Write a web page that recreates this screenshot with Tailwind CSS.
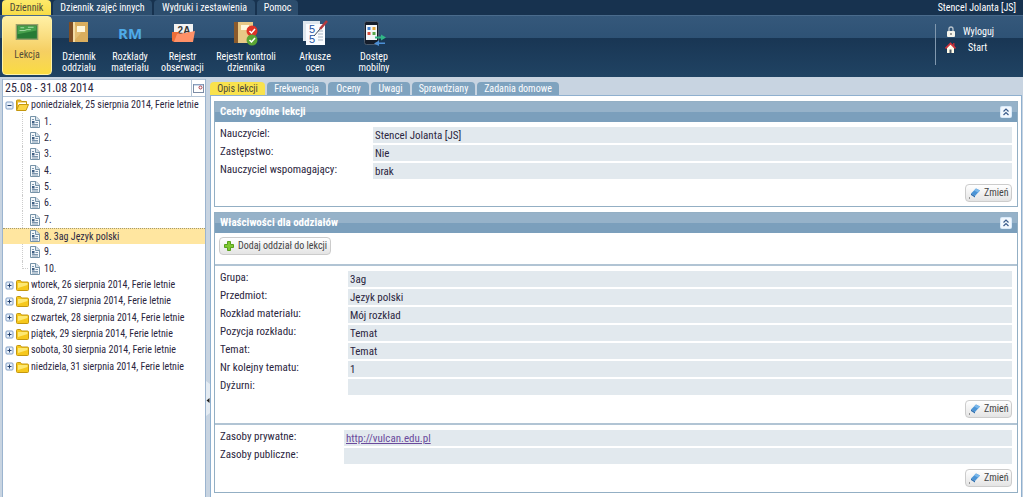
<!DOCTYPE html>
<html lang="pl">
<head>
<meta charset="utf-8">
<title>Dziennik</title>
<script src="https://cdn.jsdelivr.net/npm/@tailwindcss/browser@4"></script>
</head>
<body class="flex h-screen flex-col overflow-hidden bg-[#c8d4e1] font-['Roboto_Condensed','DejaVu_Sans_Condensed',sans-serif] text-[10px] leading-4 whitespace-nowrap text-[#2b2640]">
<svg class="hidden">
  <symbol id="doc" viewBox="0 0 10 12"><path d="M.5.5h5.500l3.500 3.500v7.500h-9z" fill="#f4f8fb" stroke="#7693a8"/><path d="M5.500.5v4h4" fill="#d5e2ec" stroke="#7693a8"/><path d="M2 5h2.500v2.500H2z" fill="#3f5f83"/><path d="M2 3.500h2M5.500 6.500h2.500M2 8.500h6M2 10h6" stroke="#5d7c9a" stroke-width=".8"/></symbol>
  <symbol id="folder" viewBox="0 0 13 12"><path d="M.5 10.500v-8q0-1 1-1h3l1 1.500h6q1 0 1 1v6.500q0 1-1 1h-10q-1 0-1-1z" fill="#f6c81d" stroke="#c4970e"/><path d="M2 4h9.500v2L2 9z" fill="#fff08a" opacity=".8"/></symbol>
  <symbol id="folderopen" viewBox="0 0 13 12"><path d="M.5 11V2q0-1 1-1h3l1 1.500h5V5" fill="#e9b92a" stroke="#c4970e"/><path d="M2 3.500h8V6H2z" fill="#fff"/><path d="M.5 11.500L3 5.500h9.500L10 11.500z" fill="#fbd544" stroke="#c4970e"/></symbol>
  <symbol id="plus" viewBox="0 0 9 9"><rect x="1" y="1" width="7" height="7" rx="1" fill="#e8f0fa" stroke="#7f9dc4"/><path d="M2.500 4.500h4M4.500 2.500v4" stroke="#23406e"/></symbol>
  <symbol id="minus" viewBox="0 0 9 9"><rect x="1" y="1" width="7" height="7" rx="1" fill="#e8f0fa" stroke="#7f9dc4"/><path d="M2.500 4.500h4" stroke="#23406e"/></symbol>
  <symbol id="collapse" viewBox="0 0 12 12"><rect width="12" height="12" rx="2" fill="#d9eafa"/><rect x="1" y="1" width="10" height="10" rx="1" fill="#f2f8fe"/><path d="M3.500 5.500L6 3l2.500 2.500M3.500 9L6 6.500 8.500 9" fill="none" stroke="#3a5c8c" stroke-width="1.200"/></symbol>
  <symbol id="edit" viewBox="0 0 12 12"><path d="M3 6.500L8 1.500l4 2L7 9z" fill="#4b94d6"/><path d="M3 6.500L7 9v1.500L3 8z" fill="#2a6cae"/><path d="M6 3.500l2-2 4 2-2 2z" fill="#7ab7ea"/><path d="M1 10.500h1v1H1z" fill="#444"/></symbol>
</svg>

<header class="flex h-[77px] shrink-0 flex-col bg-[#17324f] text-white">
  <nav class="flex h-[15px] items-stretch gap-0.5 pl-0.5 leading-4">
    <button class="w-[49px] rounded-t bg-linear-to-b from-[#fdea6b] to-[#f8dc45] text-[#4d4a3a]">Dziennik</button>
    <button class="w-[99px] rounded-t bg-[#2c4d6d]">Dziennik zajęć innych</button>
    <button class="w-[101px] rounded-t bg-[#2c4d6d]">Wydruki i zestawienia</button>
    <button class="w-[41px] rounded-t bg-[#2c4d6d]">Pomoc</button>
    <span class="ml-auto pr-[7px]">Stencel Jolanta [JS]</span>
  </nav>
  <div class="flex min-h-0 flex-1 border-t border-[#4a6b8c] bg-linear-to-b from-[#35587b] from-0% via-[#2e5275] via-36% to-[#2e5275]">
   <div class="flex flex-1 bg-[linear-gradient(to_bottom,transparent_36%,#193654_36%,#204363_100%)] pl-0.5">
    <button class="mb-0.5 flex w-[50px] flex-col items-center rounded-sm border border-[#fff3a8] bg-linear-to-b from-[#fff0a4] via-[#f5cf62] via-60% to-[#fadc40] pt-[7px] text-[#554d38]">
      <svg class="h-4 w-6" viewBox="0 0 24 17"><rect width="24" height="17" fill="#9aa06b"/><rect x="1.500" y="1.500" width="21" height="14" fill="#277b35"/><path d="M2 2h20v5L2 11z" fill="#46a04b"/><path d="M4 7h5l3-1h4M5 4h4M13 3.500h6" stroke="#c9efc6" stroke-width=".8" fill="none"/></svg>
      <span class="mt-[7px]">Lekcja</span>
    </button>
    <button class="flex w-[54px] flex-col items-center pt-[5px] leading-[11px]">
      <svg class="size-[22px]" viewBox="0 0 22 22"><path d="M1 1h5v20H1z" fill="#7d4d24"/><path d="M5 1h15v20H5z" fill="#e3bd73"/><path d="M5 1h15v20H5l8-9z" fill="#d4a450" opacity=".6"/><path d="M5 1h2v20H5z" fill="#f3dca4"/><path d="M9 5h8v6H9z" fill="#fff7dc"/></svg><span class="mt-2">Dziennik<br>oddziału</span>
    </button>
    <button class="flex w-[48px] flex-col items-center pt-[5px] leading-[11px]">
      <svg class="h-[22px] w-6" viewBox="0 0 24 22"><text x="12" y="18" text-anchor="middle" font-family="Open Sans" font-weight="700" font-size="15" fill="#4eaae8">RM</text></svg><span class="mt-2">Rozkłady<br>materiału</span>
    </button>
    <button class="flex w-[57px] flex-col items-center pt-[5px] leading-[11px]">
      <svg class="h-[22px] w-6" viewBox="0 0 24 22"><path d="M3 3h19v15H3z" fill="#f3f3f3"/><text x="13" y="13" text-anchor="middle" font-family="Liberation Sans" font-weight="700" font-size="10" fill="#333">2A</text><path d="M1 20V11h6l2 2h10v8H3z" fill="#ee6e38"/><path d="M3 21l3-8 8-1 10-2-2 11z" fill="#ff9168"/></svg><span class="mt-2">Rejestr<br>obserwacji</span>
    </button>
    <button class="flex w-[70px] flex-col items-center pt-[5px] leading-[11px]">
      <svg class="h-[25px] w-6" viewBox="0 0 24 25"><path d="M0 1h4v21H0z" fill="#8a5a2c"/><path d="M4 1h15v21H4z" fill="#e8c886"/><path d="M7 4h8v5H7z" fill="#fff7dc"/><circle cx="18" cy="10" r="5.500" fill="#df3226"/><path d="M15.500 10l2 2 3.500-4" stroke="#fff" stroke-width="1.500" fill="none"/><circle cx="18" cy="19" r="5.500" fill="#5aa534"/><path d="M15.500 19l2 2 3.500-4" stroke="#fff" stroke-width="1.500" fill="none"/></svg><span class="mt-[5px]">Rejestr kontroli<br>dziennika</span>
    </button>
    <button class="flex w-[68px] flex-col items-center pt-[3px] leading-[11px]">
      <svg class="h-[27px] w-7" viewBox="0 0 28 27"><path d="M2 2h17v20H2z" fill="#dfe7ee"/><path d="M5 5h19v21H5z" fill="#fafcff"/><text x="8" y="14" font-family="Liberation Sans" font-size="11" fill="#2455a4">5</text><text x="8" y="24" font-family="Liberation Sans" font-size="11" fill="#2455a4">5</text><path d="M17 12h5M17 15h5M17 18h5M17 21h5" stroke="#a7b6c4"/><path d="M26 2L19 10" stroke="#b23a3e" stroke-width="2.500"/><path d="M19 10l-6 7" stroke="#424a58"/></svg><span class="mt-[5px]">Arkusze<br>ocen</span>
    </button>
    <button class="flex w-[50px] flex-col items-center pt-[5px] leading-[11px]">
      <svg class="h-[25px] w-6" viewBox="0 0 24 25"><rect x="2.500" y=".5" width="14" height="23" rx="2" fill="#151d2a" stroke="#4c5b6c"/><rect x="4" y="4" width="11" height="15" fill="#f3f7fa"/><path d="M5.500 6h3v3h-3z" fill="#4583d0"/><path d="M10.500 6h3v3h-3z" fill="#e7a83b"/><path d="M5.500 11h3v3h-3z" fill="#d84f3c"/><path d="M10.500 11h3v3h-3z" fill="#58a84c"/><path d="M13 15.500h6v-2l5 3-5 3v-2h-6z" fill="#31b686"/><path d="M23 21.500h-6v-2l-5 3 5 2.500v-2h6z" fill="#4c8fd5"/></svg><span class="mt-[5px]">Dostęp<br>mobilny</span>
    </button>
    <div class="mt-2 mb-3 ml-auto w-[88px] border-l border-[#8198ae]">
      <button class="flex h-4 items-center leading-none"><svg class="mr-2 ml-[11px] h-3 w-2" viewBox="0 0 8 12"><path d="M2 6V3q0-2 2-2t2 2v3" fill="none" stroke="#b9c4cd" stroke-width="1.300"/><rect y="5" width="8" height="6" rx="1" fill="#f5f4ec"/><path d="M3.500 7h1v2h-1z" fill="#444"/></svg>Wyloguj</button>
      <button class="flex h-4 items-center leading-none"><svg class="mr-3 ml-[9px] h-3 w-[11px]" viewBox="0 0 11 12"><path d="M8 1h1.500v4H8z" fill="#b92c34"/><path d="M2 5.500L5.500 2 9 5.500V11H2z" fill="#fffbe8"/><path d="M.5 6.500l5-5 5 5" stroke="#d3323c" stroke-width="1.700" fill="none"/><path d="M4.500 7.500h2V11h-2z" fill="#4c5662"/></svg>Start</button>
    </div>
   </div>
  </div>
</header>

<main class="flex min-h-0 flex-1 pt-0.5">
  <aside class="ml-0.5 flex w-[204px] shrink-0 flex-col border-x border-[#9bb4cf] bg-white">
    <div class="flex h-[18px] items-center border-y border-[#b3c4d6]">
      <input aria-label="Zakres dat" value="25.08 - 31.08 2014" class="min-w-0 flex-1 px-0.5 text-[12px] leading-4 outline-none">
      <button aria-label="Wybierz datę" class="flex h-4 w-3.5 items-center justify-center border-l border-[#b3c4d6]"><svg class="h-[9px] w-[11px]" viewBox="0 0 11 9"><rect x=".5" y=".5" width="10" height="8" fill="#fff" stroke="#7c8ca5"/><path d="M1 1h9" stroke="#9db7da"/><circle cx="7.500" cy="3.500" r="1.500" fill="none" stroke="#a83c4a"/></svg></button>
    </div>
    <ul class="grid h-[278px] auto-rows-fr">
      <li class="flex items-center pl-0.5"><svg class="size-[9px] shrink-0"><use href="#minus"/></svg><svg class="mx-0.5 h-3 w-[13px] shrink-0"><use href="#folderopen"/></svg>poniedziałek, 25 sierpnia 2014, Ferie letnie</li>
      <li class="flex items-center"><i class="ml-[19px] h-full w-1.5 border-l border-dotted border-[#ccc]"></i><svg class="mr-1 ml-0.5 h-3 w-2.5"><use href="#doc"/></svg>1.</li>
      <li class="flex items-center"><i class="ml-[19px] h-full w-1.5 border-l border-dotted border-[#ccc]"></i><svg class="mr-1 ml-0.5 h-3 w-2.5"><use href="#doc"/></svg>2.</li>
      <li class="flex items-center"><i class="ml-[19px] h-full w-1.5 border-l border-dotted border-[#ccc]"></i><svg class="mr-1 ml-0.5 h-3 w-2.5"><use href="#doc"/></svg>3.</li>
      <li class="flex items-center"><i class="ml-[19px] h-full w-1.5 border-l border-dotted border-[#ccc]"></i><svg class="mr-1 ml-0.5 h-3 w-2.5"><use href="#doc"/></svg>4.</li>
      <li class="flex items-center"><i class="ml-[19px] h-full w-1.5 border-l border-dotted border-[#ccc]"></i><svg class="mr-1 ml-0.5 h-3 w-2.5"><use href="#doc"/></svg>5.</li>
      <li class="flex items-center"><i class="ml-[19px] h-full w-1.5 border-l border-dotted border-[#ccc]"></i><svg class="mr-1 ml-0.5 h-3 w-2.5"><use href="#doc"/></svg>6.</li>
      <li class="flex items-center"><i class="ml-[19px] h-full w-1.5 border-l border-dotted border-[#ccc]"></i><svg class="mr-1 ml-0.5 h-3 w-2.5"><use href="#doc"/></svg>7.</li>
      <li class="flex items-center border-t border-dotted border-[#a59a70] bg-[#ffe6a0]"><i class="ml-[19px] w-1.5"></i><svg class="mr-1 ml-0.5 h-3 w-2.5"><use href="#doc"/></svg>8. 3ag Język polski</li>
      <li class="flex items-center"><i class="ml-[19px] h-full w-1.5 border-l border-dotted border-[#ccc]"></i><svg class="mr-1 ml-0.5 h-3 w-2.5"><use href="#doc"/></svg>9.</li>
      <li class="flex items-center"><i class="mb-2 ml-[19px] h-2 w-1.5 border-b border-l border-dotted border-[#ccc]"></i><svg class="mr-1 ml-0.5 h-3 w-2.5"><use href="#doc"/></svg>10.</li>
      <li class="flex items-center pl-0.5"><svg class="size-[9px] shrink-0"><use href="#plus"/></svg><svg class="mx-0.5 h-3 w-[13px] shrink-0"><use href="#folder"/></svg>wtorek, 26 sierpnia 2014, Ferie letnie</li>
      <li class="flex items-center pl-0.5"><svg class="size-[9px] shrink-0"><use href="#plus"/></svg><svg class="mx-0.5 h-3 w-[13px] shrink-0"><use href="#folder"/></svg>środa, 27 sierpnia 2014, Ferie letnie</li>
      <li class="flex items-center pl-0.5"><svg class="size-[9px] shrink-0"><use href="#plus"/></svg><svg class="mx-0.5 h-3 w-[13px] shrink-0"><use href="#folder"/></svg>czwartek, 28 sierpnia 2014, Ferie letnie</li>
      <li class="flex items-center pl-0.5"><svg class="size-[9px] shrink-0"><use href="#plus"/></svg><svg class="mx-0.5 h-3 w-[13px] shrink-0"><use href="#folder"/></svg>piątek, 29 sierpnia 2014, Ferie letnie</li>
      <li class="flex items-center pl-0.5"><svg class="size-[9px] shrink-0"><use href="#plus"/></svg><svg class="mx-0.5 h-3 w-[13px] shrink-0"><use href="#folder"/></svg>sobota, 30 sierpnia 2014, Ferie letnie</li>
      <li class="flex items-center pl-0.5"><svg class="size-[9px] shrink-0"><use href="#plus"/></svg><svg class="mx-0.5 h-3 w-[13px] shrink-0"><use href="#folder"/></svg>niedziela, 31 sierpnia 2014, Ferie letnie</li>
    </ul>
  </aside>
  <button aria-label="Zwiń panel" class="flex w-1 shrink-0 justify-center pt-[302px]"><svg class="h-[35px] w-1" viewBox="0 0 4 35"><path d="M0 0l4 3v29l-4 3z" fill="#e4ebf2"/><path d="M3.500 17v5L.5 19.500z" fill="#222"/></svg></button>
  <section class="flex min-w-0 flex-1 flex-col pr-px">
    <nav class="flex h-4 shrink-0 items-stretch gap-0.5 pt-[3px] leading-[13px] text-white">
      <button class="w-[55px] rounded-t bg-[#f9e24d] text-[#4d4a3a]">Opis lekcji</button>
      <button class="w-[59px] rounded-t bg-[#7fa3bf]">Frekwencja</button>
      <button class="w-[41px] rounded-t bg-[#7fa3bf]">Oceny</button>
      <button class="w-[39px] rounded-t bg-[#7fa3bf]">Uwagi</button>
      <button class="w-[63px] rounded-t bg-[#7fa3bf]">Sprawdziany</button>
      <button class="w-[82px] rounded-t bg-[#7fa3bf]">Zadania domowe</button>
    </nav>
    <div class="flex flex-1 flex-col gap-[5px] border border-b-0 border-[#8fb0cf] bg-white px-[3px] pt-[5px]">
      <section class="border border-[#93afc4]">
        <h2 class="flex h-5 items-center justify-between bg-linear-to-b from-[#96b2c9] from-48% to-[#7b9fbc] to-52% px-[5px] text-[11px] font-bold text-white">Cechy ogólne lekcji<button aria-label="Zwiń"><svg class="size-3"><use href="#collapse"/></svg></button></h2>
        <div class="px-[5px] pt-[5px] pb-1">
          <dl class="grid grid-cols-[153px_1fr] gap-y-0.5 text-[11px]">
            <dt class="h-4 leading-[13px]">Nauczyciel:</dt><dd class="h-4 bg-[#e2e9ee] px-0.5 leading-[18px]">Stencel Jolanta [JS]</dd>
            <dt class="h-4 leading-[13px]">Zastępstwo:</dt><dd class="h-4 bg-[#e2e9ee] px-0.5 leading-[18px]">Nie</dd>
            <dt class="h-4 leading-[13px]">Nauczyciel wspomagający:</dt><dd class="h-4 bg-[#e2e9ee] px-0.5 leading-[18px]">brak</dd>
          </dl>
          <button class="mt-[5px] ml-auto flex h-[18px] w-[47px] items-center gap-1 rounded-sm border border-[#ccc] bg-linear-to-b from-white to-[#e4e4e4] pl-0.5 text-[#444]"><svg class="size-3"><use href="#edit"/></svg>Zmień</button>
        </div>
      </section>
      <section class="border border-[#93afc4]">
        <h2 class="flex h-5 items-center justify-between bg-linear-to-b from-[#96b2c9] from-48% to-[#7b9fbc] to-52% px-[5px] text-[11px] font-bold text-white">Właściwości dla oddziałów<button aria-label="Zwiń"><svg class="size-3"><use href="#collapse"/></svg></button></h2>
        <div class="h-[31px] px-1 pt-1">
          <button class="flex h-[18px] w-[112px] items-center gap-1 rounded-sm border border-[#ccc] bg-linear-to-b from-white to-[#e4e4e4] pl-1 text-[#444]"><svg class="size-2.5" viewBox="0 0 10 10"><path d="M3.500.5h3v3h3v3h-3v3h-3v-3h-3v-3h3z" fill="#7fc832" stroke="#58a11d"/></svg>Dodaj oddział do lekcji</button>
        </div>
        <div class="border-t-2 border-[#b1c4d4] px-[5px] py-[5px]">
          <dl class="grid grid-cols-[128px_1fr] gap-y-0.5 text-[11px]">
            <dt class="h-4 leading-[13px]">Grupa:</dt><dd class="h-4 bg-[#e2e9ee] px-0.5 leading-[18px]">3ag</dd>
            <dt class="h-4 leading-[13px]">Przedmiot:</dt><dd class="h-4 bg-[#e2e9ee] px-0.5 leading-[18px]">Język polski</dd>
            <dt class="h-4 leading-[13px]">Rozkład materiału:</dt><dd class="h-4 bg-[#e2e9ee] px-0.5 leading-[18px]">Mój rozkład</dd>
            <dt class="h-4 leading-[13px]">Pozycja rozkładu:</dt><dd class="h-4 bg-[#e2e9ee] px-0.5 leading-[18px]">Temat</dd>
            <dt class="h-4 leading-[13px]">Temat:</dt><dd class="h-4 bg-[#e2e9ee] px-0.5 leading-[18px]">Temat</dd>
            <dt class="h-4 leading-[13px]">Nr kolejny tematu:</dt><dd class="h-4 bg-[#e2e9ee] px-0.5 leading-[18px]">1</dd>
            <dt class="h-4 leading-[13px]">Dyżurni:</dt><dd class="h-4 bg-[#e2e9ee] px-0.5"></dd>
          </dl>
          <button class="mt-[5px] ml-auto flex h-[18px] w-[47px] items-center gap-1 rounded-sm border border-[#ccc] bg-linear-to-b from-white to-[#e4e4e4] pl-0.5 text-[#444]"><svg class="size-3"><use href="#edit"/></svg>Zmień</button>
        </div>
        <div class="border-t-2 border-[#b1c4d4] px-[5px] py-[5px]">
          <dl class="grid grid-cols-[124px_1fr] gap-y-0.5 text-[11px]">
            <dt class="h-4 leading-[13px]">Zasoby prywatne:</dt><dd class="h-4 bg-[#e2e9ee] px-0.5 leading-[18px]"><a href="http://vulcan.edu.pl" class="text-[#6a4a9c] underline">http://vulcan.edu.pl</a></dd>
            <dt class="h-4 leading-[13px]">Zasoby publiczne:</dt><dd class="h-4 bg-[#e2e9ee] px-0.5"></dd>
          </dl>
          <button class="mt-[5px] ml-auto flex h-[18px] w-[47px] items-center gap-1 rounded-sm border border-[#ccc] bg-linear-to-b from-white to-[#e4e4e4] pl-0.5 text-[#444]"><svg class="size-3"><use href="#edit"/></svg>Zmień</button>
        </div>
      </section>
    </div>
  </section>
</main>
</body>
</html>
